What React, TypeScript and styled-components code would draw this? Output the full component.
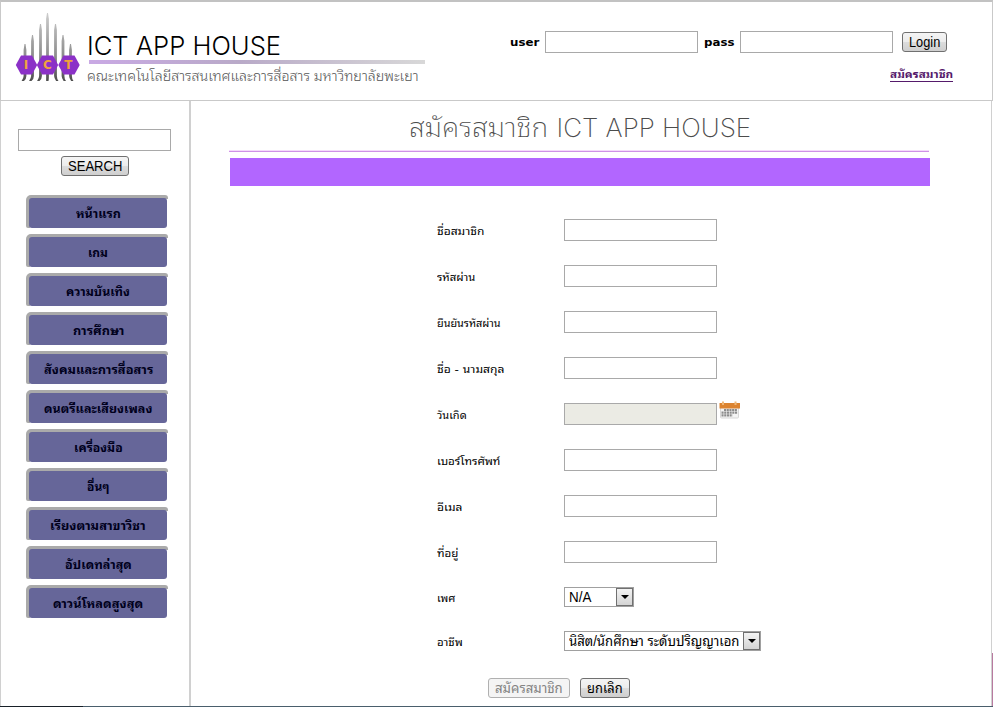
import React, { useLayoutEffect, useRef, useState } from "react";
import styled, { createGlobalStyle } from "styled-components";

const thai = `"Noto Sans Thai Looped", "Noto Looped Thai", Loma, Waree, Garuda, "Noto Sans Thai"`;

const GlobalStyle = createGlobalStyle`
  *, *::before, *::after { box-sizing: border-box; }
  body {
    margin: 0;
    background: #fff;
    color: #000;
    font-family: "DejaVu Sans", ${thai}, "Noto Sans", sans-serif;
    font-size: 11px;
  }
`;

const Page = styled.div`
  display: flex;
  flex-direction: column;
  width: 993px;
  height: 707px;
  overflow: hidden;
`;

const Header = styled.header`
  display: flex;
  flex: none;
  justify-content: space-between;
  height: 101px;
  border: 1px solid #c9c9c9;
  border-top: 2px solid #c2c2c2;
`;

const Brand = styled.div`
  display: flex;
  padding: 9px 0 0 14px;
`;

const BrandText = styled.div`
  display: flex;
  flex-direction: column;
  width: 338px;
  margin-left: 6px;
`;

const BrandName = styled.div`
  height: 38px;
  padding: 16px 0 0 0;
  margin-bottom: 11px;
  font: 300 26px/38px Inter, Roboto, sans-serif;
`;

const BrandRule = styled.div`
  height: 4px;
  margin-left: 2px;
  background: linear-gradient(90deg, #c9a9e4, #b9aac8 45%, #d8d8d8);
`;

const Faculty = styled.div`
  height: 24px;
  color: #555;
  font: 300 14px/22px ${thai}, "Noto Sans", sans-serif;
`;

const LoginArea = styled.form`
  display: flex;
  flex-direction: column;
  align-items: flex-end;
  padding: 29px 39px 0 0;
`;

const LoginRow = styled.div`
  display: flex;
  align-items: center;
  height: 22px;
  margin-right: 6px;
`;

const LoginLabel = styled.label`
  width: 35px;
  padding-top: 2px;
  font-weight: bold;
  line-height: 22px;

  & + input + & {
    width: 36px;
    margin-left: 6px;
  }
`;

const TextField = styled.input`
  width: 153px;
  height: 22px;
  padding: 1px 3px;
  border: 1px solid #a9a9a9;
  border-radius: 0;
  background: #fff;
  font: 13px "Liberation Sans", sans-serif;

  &:disabled { background: #ebebe4; }
`;

const Button = styled.button<{ $width: number }>`
  display: flex;
  align-items: center;
  justify-content: center;
  width: ${(p) => p.$width}px;
  height: 20px;
  padding: 0;
  border: 1px solid #707070;
  border-radius: 3px;
  background: linear-gradient(#f4f4f4, #ececec 48%, #dcdcdc 52%, #cfcfcf);
  color: #000;
  font: 14px/18px "Liberation Sans", ${thai}, sans-serif;

  &:disabled {
    border-color: #b0b0b0;
    background: #f4f4f4;
    color: #838383;
  }
`;

const LoginButton = styled(Button)`
  margin-left: 9px;
`;

const RegisterLink = styled.a`
  height: 14px;
  margin-top: 15px;
  color: #551a6b;
  font-weight: bold;
  line-height: 14px;
  border-bottom: 1px solid #551a6b;
`;

const Body = styled.div`
  display: flex;
  flex: 1;
  min-height: 0;
`;

const Sidebar = styled.aside`
  display: flex;
  flex-direction: column;
  align-items: center;
  width: 191px;
  padding-top: 28px;
  border-left: 1px solid #d0d0d0;
  border-right: 2px solid #d0d0d0;
`;

const SearchForm = styled.form`
  display: flex;
  flex-direction: column;
  align-items: center;
  gap: 5px;
  width: 154px;
  margin-right: 1px;
`;

const SearchField = styled(TextField)`
  align-self: flex-start;
`;

const Menu = styled.nav`
  display: flex;
  flex-direction: column;
  gap: 6px;
  margin: 19px 0 0 4px;
`;

const MenuItem = styled.a`
  display: flex;
  width: 142px;
  height: 33px;
  padding: 3px 1px 0 3px;
  border-radius: 5px 3px 0 2px;
  background: linear-gradient(#aaa, #aaa) 0 0 / 100% 4px no-repeat,
    linear-gradient(#aaa, #aaa) 0 0 / 4px 100% no-repeat;
  color: #00001c;
  font-size: 12px;
  font-weight: bold;
`;

const MenuFace = styled.span`
  display: flex;
  flex: 1;
  align-items: center;
  justify-content: center;
  padding-bottom: 1px;
  border-radius: 3px;
  background: #669;
`;

const Main = styled.main`
  display: flex;
  flex: 1;
  flex-direction: column;
  padding-left: 38px;
  border-right: 1px solid #d0d0d0;
`;

const EdgeStrip = styled.div`
  align-self: flex-end;
  width: 1px;
  height: 53px;
  background: #b87aa0;
`;

const Title = styled.h1`
  display: flex;
  align-items: center;
  justify-content: center;
  gap: 9px;
  width: 700px;
  height: 49px;
  margin: 0;
  padding: 5px 0 0 2px;
  color: #4c4c4c;
  font: 200 26px/36px Inter, ${thai}, sans-serif;
`;

const TitleRule = styled.div`
  flex: none;
  width: 700px;
  height: 2px;
  background: linear-gradient(#f4dcfb 50%, #cf92e6 50%);
`;

const Banner = styled.div`
  width: 700px;
  height: 28px;
  margin: 6px 0 33px 1px;
  background: #b266ff;
`;

const Row = styled.div<{ $height: number }>`
  display: grid;
  flex: none;
  grid-template-columns: 127px 153px auto;
  align-items: start;
  height: ${(p) => p.$height}px;
  margin-left: 208px;
`;

const Label = styled.label<{ $top?: number }>`
  line-height: 22px;
  padding-top: ${(p) => p.$top ?? 2}px;
`;

const IconSlot = styled.span`
  margin: -3px 0 0 2px;
  line-height: 0;
`;

const Select = styled.div<{ $width: number }>`
  display: flex;
  justify-content: space-between;
  width: ${(p) => p.$width}px;
  height: 20px;
  padding-left: 4px;
  border: 1px solid #a0a0a0;
  font: 14px/18px "Liberation Sans", ${thai}, sans-serif;
  white-space: nowrap;
`;

const Arrow = styled.span`
  display: grid;
  place-items: center;
  width: 17px;
  height: 18px;
  border: 1px solid #707070;
  background: linear-gradient(#f3f3f3, #d4d4d4);
`;

const Actions = styled.div`
  display: flex;
  flex: none;
  gap: 10px;
  margin-left: 259px;
`;

const BottomEdge = styled.div`
  flex: none;
  height: 1px;
  background: linear-gradient(90deg, #182028 83px, #4a5e6c 83px);
`;

const FitBox = styled.span<{ $width: number }>`
  display: inline-block;
  width: ${(p) => p.$width}px;
  white-space: pre;
`;

const FitInner = styled.span`
  display: inline-block;
  transform-origin: 0 50%;
`;

/* Sets a line of text to an exact measure, whatever Thai face is installed. */
function Fit({ width, children }: { width: number; children: string }) {
  const ref = useRef<HTMLSpanElement>(null);
  const [scale, setScale] = useState(1);
  useLayoutEffect(() => {
    const natural = ref.current?.offsetWidth;
    if (natural) setScale(width / natural);
  }, [width, children]);
  return (
    <FitBox $width={width}>
      <FitInner ref={ref} style={{ transform: `scaleX(${scale})` }}>
        {children}
      </FitInner>
    </FitBox>
  );
}

const LogoLetter = styled.text`
  font: bold 12px "DejaVu Sans", sans-serif;
  fill: #f0a23c;
`;

const spires = [
  { x: 10, top: 33 },
  { x: 17.5, top: 24 },
  { x: 25.5, top: 13 },
  { x: 32.5, top: 2 },
  { x: 40.5, top: 13 },
  { x: 48, top: 24 },
  { x: 55.5, top: 33 },
];

function Logo() {
  return (
    <svg width="66" height="74" viewBox="0 0 66 74">
      <defs>
        <linearGradient id="spire" x1="0" y1="0" x2="0" y2="74" gradientUnits="userSpaceOnUse">
          <stop offset="0" stopColor="#d0d0d0" />
          <stop offset="0.6" stopColor="#8d8d8d" />
          <stop offset="1" stopColor="#454545" />
        </linearGradient>
      </defs>
      {spires.map(({ x, top }, i) => {
        const foot = i < 3 ? -2 : i > 3 ? 2 : 0;
        return (
          <path
            key={x}
            d={`M${x - 0.5} ${top}H${x + 0.5}L${x + 1.4} ${top + 6}V65Q${x + 1.4} 68 ${x + foot + 1} 70H${x + foot - 1.4}Q${x - 1.4} 67 ${x - 1.4} 65V${top + 6}Z`}
            fill="url(#spire)"
          />
        );
      })}
      {[11.5, 32.5, 54].map((cx) => (
        <path
          key={cx}
          d={`M${cx - 10.7} 54L${cx - 5.5} 44.5H${cx + 5.5}L${cx + 10.7} 54L${cx + 5.5} 63.5H${cx - 5.5}Z`}
          fill="#8b31c7"
        />
      ))}
      <LogoLetter x="8.8" y="58.3">I</LogoLetter>
      <LogoLetter x="28" y="58.3">C</LogoLetter>
      <LogoLetter x="49.3" y="58.3">T</LogoLetter>
    </svg>
  );
}

function CalendarIcon() {
  return (
    <svg width="22" height="20" viewBox="0 0 22 20">
      <rect x="1.5" y="5" width="18" height="13" rx="1" fill="#f4f4f4" stroke="#d8d8d8" />
      <path d="M0.500 3h20.500V8.500H0.500z" fill="#dc8430" />
      <path d="M4 1.500v3.500M16.500 1.500v3.500" stroke="#efb878" strokeWidth="2" />
      <path d="M5 10h13.500M2.500 12.700h16M2.500 15.400h11" stroke="#8c8c8c" strokeWidth="2.200" strokeDasharray="2.100 .6" />
    </svg>
  );
}

function DropArrow() {
  return (
    <Arrow>
      <svg width="8" height="4" viewBox="0 0 8 4">
        <path d="M0 0h8L4 4z" fill="#000" />
      </svg>
    </Arrow>
  );
}

const menu: [string, number][] = [
  ["หน้าแรก", 45],
  ["เกม", 20],
  ["ความบันเทิง", 64],
  ["การศึกษา", 51],
  ["สังคมและการสื่อสาร", 109],
  ["ดนตรีและเสียงเพลง", 108],
  ["เครื่องมือ", 49],
  ["อื่นๆ", 22],
  ["เรียงตามสาขาวิชา", 96],
  ["อัปเดทล่าสุด", 67],
  ["ดาวน์โหลดสูงสุด", 90],
];

const fields: { label: string; width: number; date?: boolean }[] = [
  { label: "ชื่อสมาชิก", width: 47 },
  { label: "รหัสผ่าน", width: 38 },
  { label: "ยืนยันรหัสผ่าน", width: 64 },
  { label: "ชื่อ - นามสกุล", width: 67 },
  { label: "วันเกิด", width: 30, date: true },
  { label: "เบอร์โทรศัพท์", width: 63 },
  { label: "อีเมล", width: 25 },
  { label: "ที่อยู่", width: 21 },
];

export default function App() {
  return (
    <>
      <GlobalStyle />
      <Page>
        <Header>
          <Brand>
            <Logo />
            <BrandText>
              <BrandName><Fit width={194}>ICT APP HOUSE</Fit></BrandName>
              <BrandRule />
              <Faculty>
                <Fit width={332}>คณะเทคโนโลยีสารสนเทศและการสื่อสาร มหาวิทยาลัยพะเยา</Fit>
              </Faculty>
            </BrandText>
          </Brand>
          <LoginArea>
            <LoginRow>
              <LoginLabel><Fit width={29}>user</Fit></LoginLabel>
              <TextField />
              <LoginLabel><Fit width={30}>pass</Fit></LoginLabel>
              <TextField type="password" />
              <LoginButton type="button" $width={45}><Fit width={31}>Login</Fit></LoginButton>
            </LoginRow>
            <RegisterLink><Fit width={63}>สมัครสมาชิก</Fit></RegisterLink>
          </LoginArea>
        </Header>
        <Body>
          <Sidebar>
            <SearchForm>
              <SearchField />
              <Button type="button" $width={68}><Fit width={54}>SEARCH</Fit></Button>
            </SearchForm>
            <Menu>
              {menu.map(([text, width]) => (
                <MenuItem key={text}>
                  <MenuFace><Fit width={width}>{text}</Fit></MenuFace>
                </MenuItem>
              ))}
            </Menu>
          </Sidebar>
          <Main>
            <Title>
              <Fit width={139}>สมัครสมาชิก</Fit>
              <Fit width={195}>ICT APP HOUSE</Fit>
            </Title>
            <TitleRule />
            <Banner />
            {fields.map(({ label, width, date }) => (
              <Row key={label} $height={46}>
                <Label><Fit width={width}>{label}</Fit></Label>
                <TextField disabled={date} />
                {date && <IconSlot><CalendarIcon /></IconSlot>}
              </Row>
            ))}
            <Row $height={44}>
              <Label $top={1}><Fit width={18}>เพศ</Fit></Label>
              <Select $width={70}><Fit width={22}>N/A</Fit><DropArrow /></Select>
            </Row>
            <Row $height={47}>
              <Label $top={1}><Fit width={26}>อาชีพ</Fit></Label>
              <Select $width={197}>
                <Fit width={170}>นิสิต/นักศึกษา ระดับปริญญาเอก</Fit>
                <DropArrow />
              </Select>
            </Row>
            <Actions>
              <Button type="button" disabled $width={82}><Fit width={68}>สมัครสมาชิก</Fit></Button>
              <Button type="button" $width={50}><Fit width={36}>ยกเลิก</Fit></Button>
            </Actions>
          </Main>
          <EdgeStrip />
        </Body>
        <BottomEdge />
      </Page>
    </>
  );
}
